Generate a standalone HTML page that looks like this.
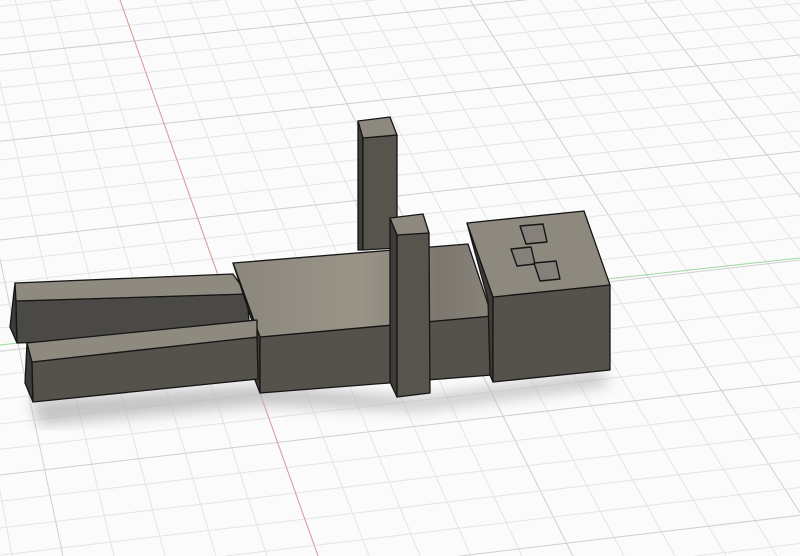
<!DOCTYPE html>
<html><head><meta charset="utf-8"><style>
html,body{margin:0;padding:0;background:#fbfbfb;width:800px;height:556px;overflow:hidden}
svg{display:block;position:absolute;left:0;top:0}
</style></head><body>
<svg id="s" width="800" height="556" viewBox="0 0 800 556" xmlns="http://www.w3.org/2000/svg">
<defs>
<linearGradient id="top" x1="0" y1="0" x2="1" y2="0">
<stop offset="0" stop-color="#8c877d"/><stop offset="0.5" stop-color="#9a9488"/><stop offset="0.8" stop-color="#7c776f"/><stop offset="1" stop-color="#8a857b"/></linearGradient>
<filter id="bl"><feGaussianBlur stdDeviation="7"/></filter>
</defs>
<rect width="800" height="556" fill="#fbfbfb"/>
<g id="grid" stroke-width="1" fill="none"></g>
<line x1="120" y1="0" x2="318" y2="556" stroke="#e39a9a" stroke-width="1"/>
<line x1="0" y1="345" x2="800" y2="258" stroke="#9fd89f" stroke-width="1"/>
<polygon points="30,400 260,385 420,398 600,372 610,385 420,410 260,405 40,425" fill="#b5b5b5" filter="url(#bl)" opacity="0.8"/>
<g stroke="#151515" stroke-width="1.3" stroke-linejoin="round">
<polygon points="358,121 363,138 363,250 358,250" fill="#3f3d39"/>
<polygon points="363,138 397,135 397,248 363,250" fill="#57544e"/>
<polygon points="358,121 390,117 397,135 363,138" fill="#8e897f"/>
<polygon points="15,283 16,301 17,343 10,327" fill="#3e3c38"/>
<polygon points="16,301 247,294 250,336 17,343" fill="#4b4945"/>
<polygon points="15,283 233,274 247,294 16,301" fill="#8f8a80"/>
<polygon points="233,263 260,337 260,393 255,380 255,330" fill="#3e3c38"/>
<polygon points="260,337 492,316 492,375 260,393" fill="#55524c"/>
<polygon points="233,263 468,244 492,316 260,337" fill="url(#top)"/>
<polygon points="27,343 32,362 33,402 25,383" fill="#3e3c38"/>
<polygon points="32,362 257,337 258,379 33,402" fill="#55524c"/>
<polygon points="27,343 257,320 257,337 32,362" fill="#8f8a80"/>
<polygon points="467,223 493,297 493,382 490,375 488,300" fill="#3e3c38"/>
<polygon points="493,297 610,285 610,370 493,382" fill="#55524c"/>
<polygon points="467,223 584,211 610,285 493,297" fill="#8e897f"/>
<g fill="#85807a" stroke-width="1.4">
<polygon points="520,226 543,224 547,242 526,244"/>
<polygon points="511,249 531,247 535,264 517,266"/>
<polygon points="534,263 556,261 560,279 540,281"/>
</g>
<polygon points="390,218 397,235 397,397 390,382" fill="#3e3c38"/>
<polygon points="397,235 429,233 430,393 397,397" fill="#57544e"/>
<polygon points="390,218 423,214 429,233 397,235" fill="#8e897f"/>
</g>
</svg>
<script>
(function(){
var g=document.getElementById('grid'),h='';
for(var i=-12;i<=22;i++){
 var xt=120+i*35, xb=318+i*51;
 var c=(i%5==0)?'#cfcfcf':'#e4e4e4';
 h+='<line x1="'+xt+'" y1="0" x2="'+xb+'" y2="556" stroke="'+c+'"/>';
}
for(var j=-6;j<=30;j++){
 var yl=55+16*j+0.25*j*j*(j>0?1:-0.3), sl=-0.105-0.0006*j;
 var c=(j%5==0)?'#cfcfcf':'#e4e4e4';
 h+='<line x1="0" y1="'+yl+'" x2="800" y2="'+(yl+800*sl)+'" stroke="'+c+'"/>';
}
g.innerHTML=h;
})();
</script>
</body></html>
